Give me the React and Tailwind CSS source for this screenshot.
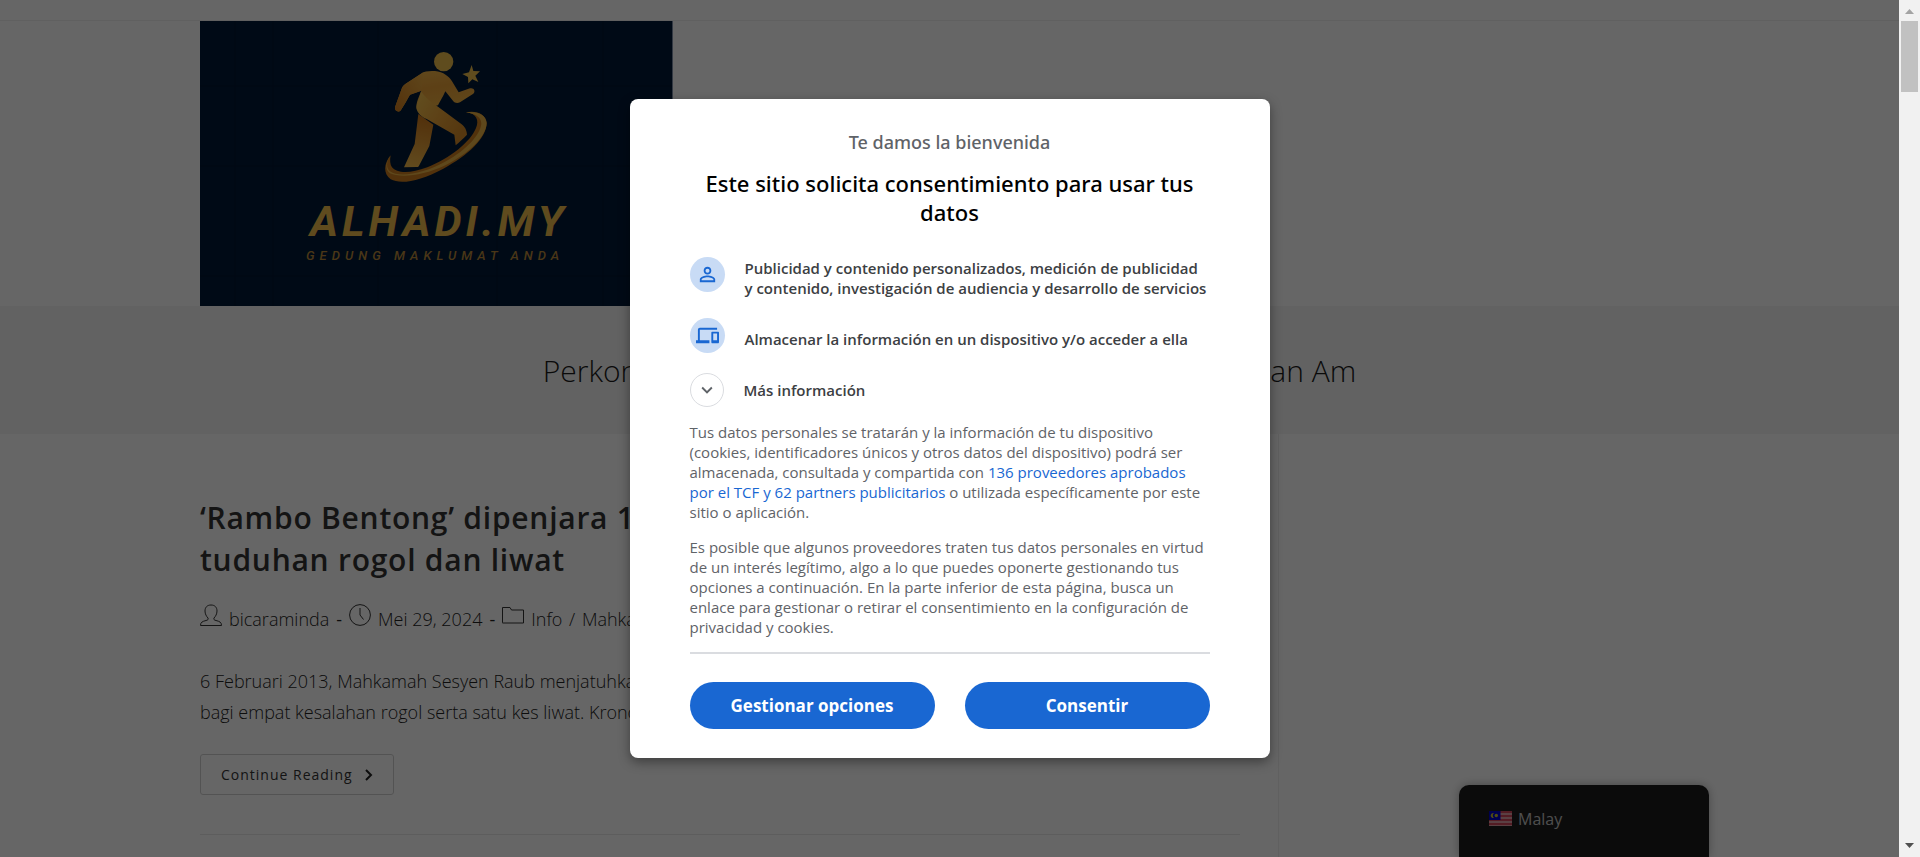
import React from "react";

function Logo() {
  return (
    <svg viewBox="0 0 473 285" className="block h-[285px] w-[473px]" role="img" aria-label="Alhadi.my">
      <defs>
        <linearGradient id="gold" x1="0" y1="0" x2="0.3" y2="1">
          <stop offset="0" stopColor="#f2b84a" />
          <stop offset="0.5" stopColor="#e8a038" />
          <stop offset="1" stopColor="#f0b242" />
        </linearGradient>
        <linearGradient id="arm" x1="1" y1="0" x2="0" y2="1">
          <stop offset="0" stopColor="#eeb044" />
          <stop offset="1" stopColor="#d07c1e" />
        </linearGradient>
        <linearGradient id="leg" x1="0" y1="0" x2="1" y2="0.6">
          <stop offset="0" stopColor="#f5c450" />
          <stop offset="0.55" stopColor="#e8a238" />
          <stop offset="1" stopColor="#d48a28" />
        </linearGradient>
        <linearGradient id="backLeg" x1="0.4" y1="0" x2="0.3" y2="1">
          <stop offset="0" stopColor="#cc781c" />
          <stop offset="1" stopColor="#f2ba4c" />
        </linearGradient>
      </defs>
      <rect width="473" height="285" fill="#001a38" />
      <g stroke="#00122a" strokeWidth="1" opacity="0.5">
        <path d="M35 0V285M73 0V285M178 0V285M297 0V285M403 0V285M0 65H472M0 145H472M0 255H472" />
      </g>
      <rect x="472" width="1" height="285" fill="#8090a8" />
      <g transform="translate(170 19) scale(0.33333)">
        <circle cx="221" cy="65" r="29" fill="#eebd4c" />
        <path d="M305 75 L310 93 L330 94 L316 107 L325 126 L307 118 L295 130 L294 111 L277 102 L297 97 Z" fill="#eebd4c" />
        <path d="M142 212 C134 200 143 178 154 152 L120 164 C112 178 103 194 93 210 C85 220 73 212 75 202 L95 146 C97 140 101 136 106 132 L160 97 C170 92 183 94 195 93 C220 95 238 110 246 124 L266 157 L300 145 C311 142 318 153 310 161 L270 187 C262 191 254 189 250 184 L226 154 C218 172 210 184 204 196 Z" fill="url(#gold)" />
        <path d="M154 152 L120 164 C112 178 103 194 93 210 C85 220 73 212 75 202 L95 146 C97 140 101 136 106 132 L160 97 Z" fill="url(#arm)" />
        <path d="M145 222 L190 254 L178 318 L147 377 C146 380 143 382 140 381 L102 382 L134 312 Z" fill="url(#backLeg)" />
        <path d="M153 154 C148 180 134 195 143 215 C149 226 160 233 170 237 L253 284 L257 316 C266 308 280 296 291 284 C290 268 284 260 274 252 L204 200 C180 186 166 172 153 154 Z" fill="url(#leg)" />
        <path d="M62 346 C40 372 40 402 62 418 C92 434 150 424 220 386 C292 346 350 296 350 248 C347 222 318 210 288 217 C320 220 328 242 318 264 C302 305 240 355 172 382 C120 402 80 400 66 382 C60 374 59 360 62 346 Z" fill="#cc7e20" />
        <path d="M62 346 C48 366 48 384 60 394 C88 414 160 402 228 364 C292 328 330 284 334 252 C334 234 320 222 288 217 C322 212 349 224 350 250 C348 290 298 340 226 376 C160 408 90 414 60 400 C45 390 46 366 62 346 Z" fill="#ecb546" />
      </g>
      <g fill="#eebb4c" fontFamily="Roboto, 'Liberation Sans', sans-serif" fontStyle="italic" fontWeight="700">
        <text x="110" y="215" fontSize="43" letterSpacing="4">ALHADI.MY</text>
        <text x="106" y="239" fontSize="13" letterSpacing="5" fill="#b8883a" fontWeight="500">GEDUNG MAKLUMAT ANDA</text>
      </g>
    </svg>
  );
}

function MetaIcon({ children }) {
  return (
    <svg viewBox="0 0 22 22" className="h-[22px] w-[22px] shrink-0 self-start" fill="none" stroke="#333" strokeWidth="1" strokeLinejoin="round" aria-hidden="true">
      {children}
    </svg>
  );
}

function Post() {
  return (
    <article className="mr-[38px] border-b border-[#e9e9e9] pb-[39px]">
      <h2 className="text-[30px] leading-[42px] font-semibold tracking-wide text-[#333]">
        <a href="#post">
          ‘Rambo Bentong’ dipenjara 15 tahun atas
          <br />
          tuduhan rogol dan liwat
        </a>
      </h2>
      <ul className="mt-[23px] flex items-center gap-[7px] text-[18px] leading-[30px] font-light whitespace-nowrap text-[#222]">
        <li className="flex items-center gap-[7px]">
          <MetaIcon>
            <path d="M11 1 C7 1 5 3.5 5 7 C5 10 6.500 12.500 8 14 C8.500 15.500 8 16 6 16.500 C2.500 17.500 0.500 18 0.500 21.500 H21.500 C21.500 18 19.500 17.500 16 16.500 C14 16 13.500 15.500 14 14 C15.500 12.500 17 10 17 7 C17 3.500 15 1 11 1 Z" />
          </MetaIcon>
          <a href="#author">bicaraminda</a>
        </li>
        <li className="font-normal">-</li>
        <li className="flex items-center gap-[7px]">
          <MetaIcon>
            <circle cx="11" cy="11" r="10.400" />
            <path d="M11 4 V11 L14.500 15.500" />
          </MetaIcon>
          Mei 29, 2024
        </li>
        <li className="font-normal">-</li>
        <li className="flex items-center gap-[7px]">
          <MetaIcon>
            <path d="M0.500 18.500 V3.500 H8 L9.500 6 H21.500 V19 H0.500 Z" />
          </MetaIcon>
          <span>
            <a href="#info">Info</a> <span className="px-[2px]">/</span> <a href="#mahkamah">Mahkamah</a>
          </span>
        </li>
      </ul>
      <p className="mt-[32px] text-[18px] leading-[31px] font-light text-[#222]">
        6 Februari 2013, Mahkamah Sesyen Raub menjatuhkan hukuman penjara
        <br />
        bagi empat kesalahan rogol serta satu kes liwat. Kronologi kes
      </p>
      <a href="#continue" className="mt-[26px] inline-flex h-[41px] items-center gap-3 rounded-[3px] border border-[#d0d0d0] px-5 text-[14px] tracking-[1px] text-[#333]">
        Continue Reading
        <svg viewBox="0 0 8 12" className="h-3 w-2" fill="none" stroke="#222" strokeWidth="2" aria-hidden="true">
          <path d="M1 1 L6 6 L1 11" />
        </svg>
      </a>
    </article>
  );
}

function LanguageSwitcher() {
  return (
    <button type="button" className="absolute right-[190px] bottom-0 flex h-[72px] w-[250px] items-start gap-[6px] rounded-t-[10px] bg-[#1d1d1d] px-[30px] pt-[23px] text-[16px] leading-[22px] text-[#c4c4c4] shadow-[0_0_10px_rgba(0,0,0,0.3)]">
      <svg viewBox="0 0 23 15" className="mt-[3px] h-[15px] w-[23px]" aria-hidden="true">
        <rect width="23" height="15" fill="#e0a0a8" />
        <path d="M0 1H23M0 5H23M0 9H23M0 13H23" stroke="#d0485a" strokeWidth="2" />
        <rect width="11.500" height="9" fill="#0000c8" />
        <path d="M5 2 A2.600 2.600 0 1 0 5 7 A3.200 3.200 0 0 1 5 2 Z" fill="#c9c02c" />
        <circle cx="7.300" cy="4.500" r="1.700" fill="#c9c02c" />
      </svg>
      Malay
    </button>
  );
}

function Page() {
  return (
    <div className="relative min-w-0 flex-1 overflow-hidden bg-white">
      <div className="h-[21px] border-b border-[#f0f0f0]" />
      <header className="px-[200px]">
        <a href="#home" className="block w-[473px]">
          <Logo />
        </a>
      </header>
      <div className="flex h-[128px] items-center justify-center bg-[#f5f5f5] pt-[2px] whitespace-nowrap">
        <h1 className="text-[30px] leading-[42px] font-light text-[#1a1a1a]">Perkongsian Info Terkini, Berita Semasa, Ilmu Agama dan Am</h1>
      </div>
      <div className="px-[200px]">
        <main className="h-[800px] w-[72%] border-r border-[#f0f0f0] pt-[63px]">
          <Post />
        </main>
      </div>
      <LanguageSwitcher />
      <div className="absolute inset-0 bg-black/60" />
      <div className="absolute inset-0 flex items-center justify-center">
        <ConsentDialog />
      </div>
    </div>
  );
}

function Purpose({ icon, children, textClass }) {
  return (
    <li className="flex items-start gap-5">
      <span className="flex h-[35px] w-[35px] shrink-0 items-center justify-center rounded-full bg-[#c8dbf5]">{icon}</span>
      <span className={textClass}>{children}</span>
    </li>
  );
}

function ConsentDialog() {
  return (
    <section role="dialog" aria-labelledby="consent-title" className="w-[640px] rounded-lg bg-white px-[60px] pt-[31px] pb-[29px] text-[#5f6368] shadow-[0_4px_12px_rgba(0,0,0,0.4)]">
      <p className="text-center font-['Noto_Sans',sans-serif] text-[18px] leading-6 font-medium">Te damos la bienvenida</p>
      <h2 id="consent-title" className="mt-[15px] text-center font-['Noto_Sans',sans-serif] text-[22px] leading-[29px] font-medium text-black">
        Este sitio solicita consentimiento para usar tus datos
      </h2>
      <ul className="mt-[30px] flex flex-col gap-[20px] text-[15px] leading-5 font-semibold text-[#3c4043]">
        <Purpose
          textClass="pt-px"
          icon={
            <svg viewBox="0 0 24 24" className="h-[23px] w-[23px]" fill="#1967d2" aria-hidden="true">
              <path d="M12 5.900a2.100 2.100 0 1 1 0 4.200 2.100 2.100 0 0 1 0-4.200m0 9c2.970 0 6.100 1.460 6.100 2.100v1.100H5.900V17c0-.640 3.130-2.100 6.100-2.100M12 4C9.790 4 8 5.790 8 8s1.790 4 4 4 4-1.790 4-4-1.790-4-4-4m0 9c-2.670 0-8 1.340-8 4v3h16v-3c0-2.660-5.330-4-8-4" />
            </svg>
          }
        >
          Publicidad y contenido personalizados, medición de publicidad y contenido, investigación de audiencia y desarrollo de servicios
        </Purpose>
        <Purpose
          textClass="pt-[11px]"
          icon={
            <svg viewBox="0 0 24 24" className="h-[23px] w-[23px]" fill="#1967d2" aria-hidden="true">
              <path d="M4 6h18V4H4c-1.100 0-2 .9-2 2v11H0v3h14v-3H4zm19 2h-6c-.55 0-1 .45-1 1v10c0 .55.45 1 1 1h6c.55 0 1-.45 1-1V9c0-.55-.45-1-1-1m-1 9h-4v-7h4z" />
            </svg>
          }
        >
          Almacenar la información en un dispositivo y/o acceder a ella
        </Purpose>
      </ul>
      <button type="button" className="mt-5 flex items-center gap-5 text-[15px] leading-5 font-semibold text-[#3c4043]">
        <span className="flex h-[34px] w-[34px] items-center justify-center rounded-full border border-[#dadce0]">
          <svg viewBox="0 0 24 24" className="h-[22px] w-[22px]" fill="#5f6368" aria-hidden="true">
            <path d="M7.410 8.590 12 13.170l4.590-4.580L18 10l-6 6-6-6z" />
          </svg>
        </span>
        Más información
      </button>
      <div className="mt-[15px] flex flex-col gap-[15px] text-[15px] leading-5">
        <p>
          Tus datos personales se tratarán y la información de tu dispositivo (cookies, identificadores únicos y otros datos del dispositivo) podrá ser almacenada, consultada y compartida con{" "}
          <a href="#vendors" className="text-[#1967d2]">136 proveedores aprobados por el TCF y 62 partners publicitarios</a> o utilizada específicamente por este sitio o aplicación.
        </p>
        <p>
          Es posible que algunos proveedores traten tus datos personales en virtud de un interés legítimo, algo a lo que puedes oponerte gestionando tus opciones a continuación. En la parte inferior de esta página, busca un enlace para gestionar o retirar el consentimiento en la configuración de privacidad y cookies.
        </p>
      </div>
      <div className="mt-[15px] grid grid-cols-2 gap-[30px] border-t-2 border-[#dadce0] pt-[28px] text-[17px] leading-6 font-bold text-white">
        <button type="button" className="h-[47px] rounded-full bg-[#1967d2]">Gestionar opciones</button>
        <button type="button" className="h-[47px] rounded-full bg-[#1967d2]">Consentir</button>
      </div>
    </section>
  );
}

function Scrollbar() {
  return (
    <div className="flex w-[21px] shrink-0 flex-col items-center bg-[#f1f1f1]" aria-hidden="true">
      <svg viewBox="0 0 21 21" className="h-[21px] w-[21px]">
        <path d="M6 14 L10.500 9 L15 14 Z" fill="#a3a3a3" />
      </svg>
      <div className="h-[71px] w-[17px] bg-[#c1c1c1]" />
      <svg viewBox="0 0 21 21" className="mt-auto h-[21px] w-[21px]">
        <path d="M6 7 L10.500 12 L15 7 Z" fill="#505050" />
      </svg>
    </div>
  );
}

export default function App() {
  return (
    <div className="flex h-screen overflow-hidden font-['Open_Sans',sans-serif]">
      <Page />
      <Scrollbar />
    </div>
  );
}
